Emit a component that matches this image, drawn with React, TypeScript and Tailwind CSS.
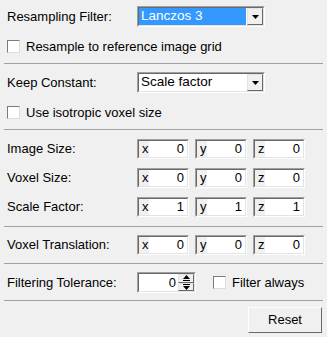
import React from "react";

const FONT = { fontFamily: '"Liberation Sans", Arial, sans-serif' };

const Separator = ({ className = "" }: { className?: string }) => (
    <div className={`h-px bg-[#a0a0a0] ${className}`} />
);

const Checkbox = ({ label }: { label: string }) => (
    <div className="flex items-center h-[13px]">
        <div className="w-[13px] h-[13px] bg-white border border-t-[#7a7a7a] border-l-[#7a7a7a] border-b-[#dcdcdc] border-r-[#dcdcdc] shrink-0" />
        <span className="ml-[6px] leading-none">{label}</span>
    </div>
);

const Arrow = ({ up = false }: { up?: boolean }) => (
    <svg width="7" height="4" viewBox="0 0 7 4" className="block">
        {up ? <polygon points="3.5,0 7,4 0,4" fill="#000" /> : <polygon points="0,0 7,0 3.5,4" fill="#000" />}
    </svg>
);

const Combo = ({ value, selected = false }: { value: string; selected?: boolean }) => (
    <div className="w-[128px] h-[21px] border border-t-[#a0a0a0] border-l-[#a0a0a0] border-b-white border-r-white">
        <div className="h-full flex border border-t-[#696969] border-l-[#696969] border-b-[#e3e3e3] border-r-[#e3e3e3] bg-white">
            <div className={`flex-1 flex items-center pl-[2px] mr-[1px] text-[13.5px] ${selected ? "bg-[#3399ff] text-white" : ""}`}>
                {value}
            </div>
            <div className="w-[16px] h-full flex items-center justify-center bg-[#f0f0f0] border border-t-[#e3e3e3] border-l-[#e3e3e3] border-b-[#696969] border-r-[#696969]">
                <Arrow />
            </div>
        </div>
    </div>
);

const Field = ({ axis, value }: { axis: string; value: string }) => (
    <div className="w-[52px] h-[20px] border border-t-[#a0a0a0] border-l-[#a0a0a0] border-b-white border-r-white">
        <div className="h-full flex border border-t-[#696969] border-l-[#696969] border-b-[#e3e3e3] border-r-[#e3e3e3]">
            <div className="w-[10px] bg-[#f0f0f0] flex items-center pl-[3px] overflow-visible">{axis}</div>
            <div className="flex-1 bg-white flex items-center justify-end pr-[3px]">{value}</div>
        </div>
    </div>
);

const FieldRow = ({ label, values, className = "" }: { label: string; values: string[]; className?: string }) => (
    <div className={`flex items-center h-[20px] ${className}`}>
        <div className="w-[130px]">{label}</div>
        <div className="flex gap-[6px]">
            <Field axis="x" value={values[0]} />
            <Field axis="y" value={values[1]} />
            <Field axis="z" value={values[2]} />
        </div>
    </div>
);

const SpinButton = ({ up = false }: { up?: boolean }) => (
    <div className="flex-1 flex flex-col items-center justify-center gap-[1px] bg-[#f0f0f0] border border-t-[#e3e3e3] border-l-[#e3e3e3] border-b-[#696969] border-r-[#696969]">
        {up ? (
            <>
                <Arrow up />
                <div className="w-[7px] h-px bg-black" />
            </>
        ) : (
            <>
                <div className="w-[7px] h-px bg-black" />
                <Arrow />
            </>
        )}
    </div>
);

export default function App() {
    return (
        <div className="w-[327px] h-[337px] bg-[#f0f0f0] text-black text-[13px] px-[4px] pt-[6px] overflow-hidden" style={FONT}>
            <div className="pl-[3px]">
                <div className="flex items-center h-[21px]">
                    <div className="w-[130px]">Resampling Filter:</div>
                    <Combo value="Lanczos 3" selected />
                </div>
                <div className="mt-[13px]">
                    <Checkbox label="Resample to reference image grid" />
                </div>
            </div>
            <Separator className="mt-[10px]" />

            <div className="pl-[3px]">
                <div className="flex items-center h-[21px] mt-[8px]">
                    <div className="w-[130px]">Keep Constant:</div>
                    <Combo value="Scale factor" />
                </div>
                <div className="mt-[13px]">
                    <Checkbox label="Use isotropic voxel size" />
                </div>
            </div>
            <Separator className="mt-[10px]" />

            <div className="pl-[3px]">
                <FieldRow label="Image Size:" values={["0", "0", "0"]} className="mt-[9px]" />
                <FieldRow label="Voxel Size:" values={["0", "0", "0"]} className="mt-[9px]" />
                <FieldRow label="Scale Factor:" values={["1", "1", "1"]} className="mt-[9px]" />
            </div>
            <Separator className="mt-[9px]" />

            <div className="pl-[3px]">
                <FieldRow label="Voxel Translation:" values={["0", "0", "0"]} className="mt-[8px]" />
            </div>
            <Separator className="mt-[8px]" />

            <div className="pl-[3px] flex items-center h-[21px] mt-[8px]">
                <div className="w-[130px]">Filtering Tolerance:</div>
                <div className="w-[59px] h-[21px] border border-t-[#a0a0a0] border-l-[#a0a0a0] border-b-white border-r-white">
                    <div className="h-full flex border border-t-[#696969] border-l-[#696969] border-b-[#e3e3e3] border-r-[#e3e3e3] bg-white">
                        <div className="flex-1 flex items-center justify-end pr-[2px]">0</div>
                        <div className="w-[16px] flex flex-col">
                            <SpinButton up />
                            <SpinButton />
                        </div>
                    </div>
                </div>
                <div className="ml-[17px]">
                    <Checkbox label="Filter always" />
                </div>
            </div>
            <Separator className="mt-[7px]" />

            <div className="flex justify-end mt-[6px] pr-[1px]">
                <button
                    type="button"
                    className="w-[74px] h-[26px] bg-[#f0f0f0] border border-t-white border-l-white border-b-[#696969] border-r-[#696969] flex items-center justify-center"
                >
                    Reset
                </button>
            </div>
        </div>
    );
}
